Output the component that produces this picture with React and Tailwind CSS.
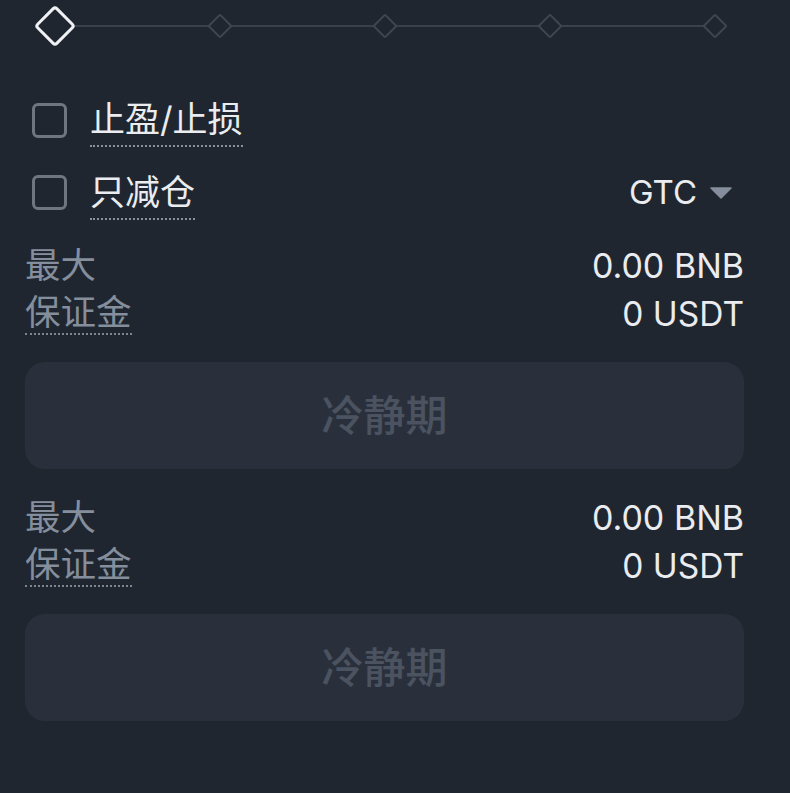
const FONT = { fontFamily: 'Inter, "Noto Sans CJK SC", sans-serif' };

function Slider() {
  const marks = [0, 25, 50, 75, 100];
  return (
    <div className="h-[52px] flex items-center">
      <div className="relative ml-[30px] w-[660px] h-[2px] bg-[#3a414c]">
        {marks.map((m) =>
          m === 0 ? (
            <span
              key={m}
              className="absolute top-1/2 left-0 -translate-x-1/2 -translate-y-1/2 w-[30px] h-[30px] rotate-45 rounded-[4px] border-[3px] border-[#f0f1f3] bg-[#1f2630]"
            />
          ) : (
            <span
              key={m}
              className={`absolute top-1/2 -translate-x-1/2 -translate-y-1/2 w-[18px] h-[18px] rotate-45 rounded-[2px] border-2 border-[#3f4652] bg-[#1f2630] ${
                m === 25 ? "left-1/4" : m === 50 ? "left-1/2" : m === 75 ? "left-3/4" : "left-full"
              }`}
            />
          )
        )}
      </div>
    </div>
  );
}

function CheckRow({ label, right, className = "" }) {
  return (
    <div className={`flex items-center ${className}`}>
      <span className="ml-[7px] w-[35px] h-[35px] rounded-[6px] border-[3px] border-[#6f7681]" />
      <span className="ml-[23px] text-[35px] leading-[52px] text-[#eaecef] border-b-2 border-dotted border-[#8a919c]">
        {label}
      </span>
      {right}
    </div>
  );
}

function Block({ className = "" }) {
  return (
    <div className={className}>
      <div className="h-[48px] flex items-center justify-between">
        <span className="text-[35.5px] leading-[40px] text-[#858e9c]">最大</span>
        <span className="text-[34px] leading-[40px] text-[#eaecef]">0.00 BNB</span>
      </div>
      <div className="h-[48px] flex items-center justify-between">
        <span className="text-[35.5px] leading-[40px] text-[#858e9c] border-b-2 border-dotted border-[#7d8592]">
          保证金
        </span>
        <span className="text-[33.5px] leading-[40px] text-[#eaecef]">0 USDT</span>
      </div>
      <button
        type="button"
        className="mt-[24px] w-full h-[107px] rounded-[20px] bg-[#2a303b] flex items-center justify-center text-[42px] font-medium text-[#4b5361]"
      >
        冷静期
      </button>
    </div>
  );
}

export default function App() {
  return (
    <div className="w-[790px] h-[793px] bg-[#1f2630] overflow-hidden" style={FONT}>
      <div className="pl-[25px] w-[744px]">
        <Slider />
        <CheckRow label="止盈/止损" className="mt-[32px] h-[72px]" />
        <CheckRow
          label="只减仓"
          className="h-[73px]"
          right={
            <span className="ml-auto mr-[12px] flex items-center gap-[13px]">
              <span className="text-[33px] text-[#eaecef]">GTC</span>
              <svg width="22" height="12" viewBox="0 0 22 12">
                <path d="M1 1h20l-10 10z" fill="#858e9c" stroke="#858e9c" strokeWidth="1.5" strokeLinejoin="round" />
              </svg>
            </span>
          }
        />
        <Block className="mt-[13px]" />
        <Block className="mt-[25px]" />
      </div>
    </div>
  );
}
